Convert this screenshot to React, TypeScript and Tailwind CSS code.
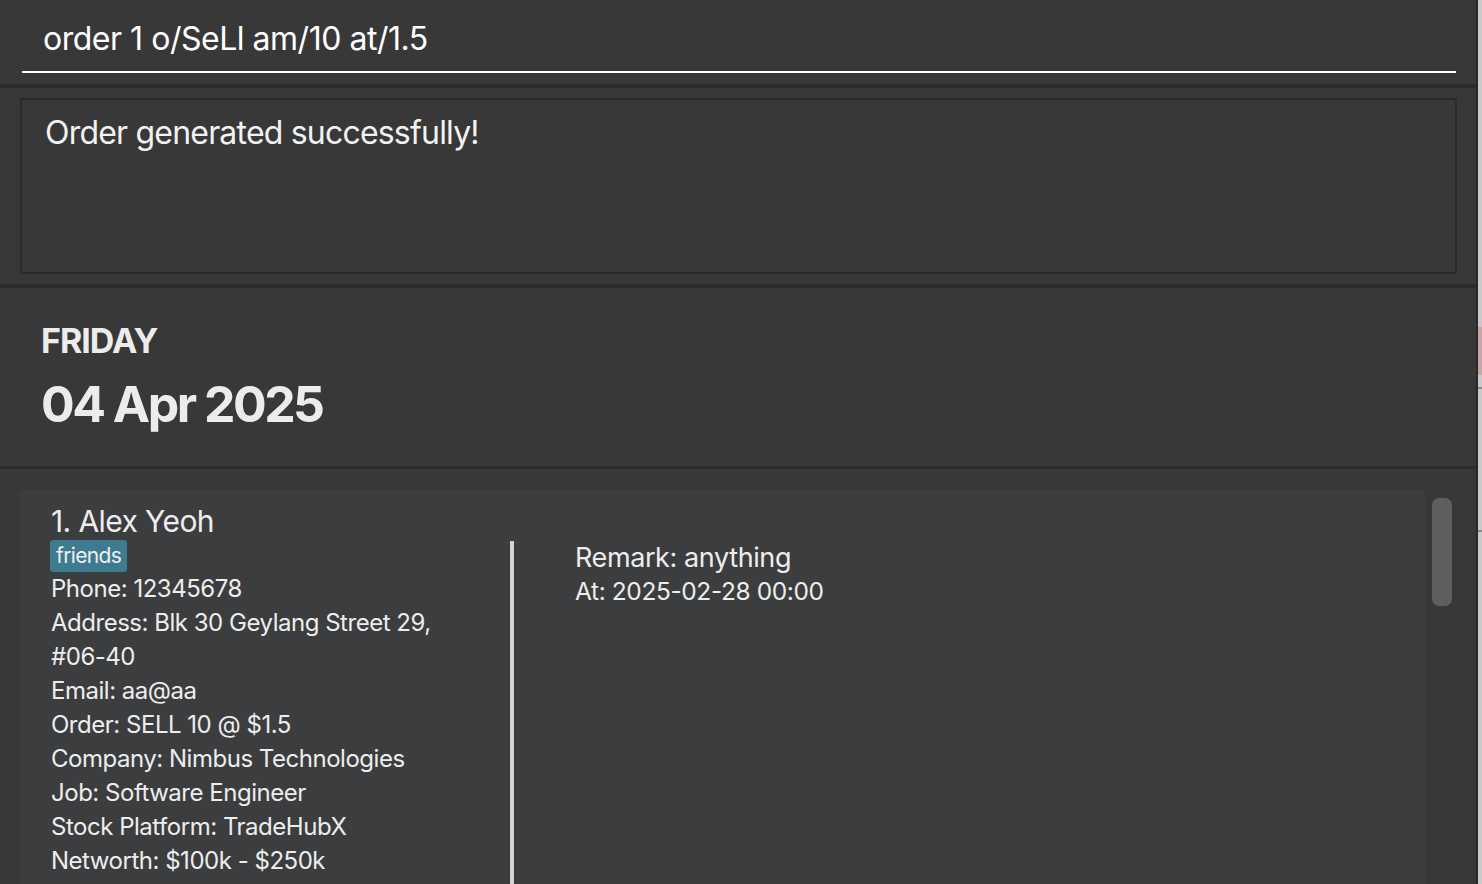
import React from "react";

export default function App() {
  const font = { fontFamily: "Inter, 'Noto Sans', sans-serif" };
  const lines = [
    "Phone: 12345678",
    "Address: Blk 30 Geylang Street 29, #06-40",
    "Email: aa@aa",
    "Order: SELL 10 @ $1.5",
    "Company: Nimbus Technologies",
    "Job: Software Engineer",
    "Stock Platform: TradeHubX",
    "Networth: $100k - $250k",
  ];
  return (
    <div className="flex h-[884px] w-[1482px] overflow-hidden bg-[#383838]" style={font}>
      <div className="flex w-[1478px] flex-col border-r-2 border-[#2a2a2a]">
        {/* command box */}
        <div className="h-[84px] pl-[22px] pr-[20px] pt-[10px]">
          <div className="flex h-[63px] items-center border-b-2 border-white pb-[4px] pl-[21px] text-[32px] tracking-[-0.015em] text-white">
            order 1 o/SeLl am/10 at/1.5
          </div>
        </div>
        <div className="h-[4px] bg-[#2b2b2b]" />
        {/* result box */}
        <div className="h-[196px] pl-[20px] pr-[19px] py-[10px]">
          <div className="h-full border-2 border-[#2b2b2b] pl-[23px] pt-[12px] text-[32px] leading-[42px] tracking-[-0.025em] text-[#f2f2f2]">
            Order generated successfully!
          </div>
        </div>
        <div className="h-[4px] bg-[#2b2b2b]" />
        {/* date */}
        <div className="flex h-[178px] flex-col px-[41px] pt-[33px] font-bold text-[#ececec]">
          <div className="text-[34px] leading-[40px] tracking-[-0.03em]">FRIDAY</div>
          <div className="mt-[13px] text-[50px] leading-[60px] tracking-[-0.05em]">04 Apr 2025</div>
        </div>
        <div className="h-[3px] bg-[#2b2b2b]" />
        {/* list */}
        <div className="flex flex-1 pl-[20px] pt-[21px]">
          <div className="flex w-[1405px] bg-[#3c3d3f] pl-[31px] pt-[13px] text-[#ededed]">
            <div className="flex w-[459px] flex-col">
              <div className="text-[30px] leading-[36px] tracking-[-0.02em]">1. Alex Yeoh</div>
              <div className="mt-[1px] flex">
                <span className="-ml-[1px] flex h-[32px] items-center rounded-[3px] bg-[#3e7b91] px-[6px] text-[21px] tracking-[-0.03em] text-[#f0f0f0]">
                  friends
                </span>
              </div>
              <div className="w-[440px] text-[24px] leading-[34px] tracking-[-0.02em]">
                {lines.map((l) => (
                  <div key={l}>{l}</div>
                ))}
              </div>
            </div>
            <div className="mt-[38px] w-[4px] self-stretch bg-[#d4d4d4]" />
            <div className="flex flex-col pl-[61px] pt-[38px] tracking-[-0.025em]">
              <div className="text-[27px] leading-[34px]">Remark: anything</div>
              <div className="text-[24.5px] leading-[32px]">At: 2025-02-28 00:00</div>
            </div>
          </div>
          <div className="flex w-[51px] justify-start pl-[7px] pt-[8px]">
            <div className="h-[108px] w-[20px] rounded-[7px] bg-[#5e5e5e]" />
          </div>
        </div>
      </div>
      <div className="flex w-[4px] flex-col bg-[#cacaca]">
        <div className="h-[327px]" />
        <div className="h-[48px] bg-[#c9a5a7]" />
        <div className="h-[12px]" />
        <div className="h-[2px] bg-[#8a8a8a]" />
        <div className="h-[141px]" />
        <div className="h-[2px] bg-[#8a8a8a]" />
      </div>
    </div>
  );
}
